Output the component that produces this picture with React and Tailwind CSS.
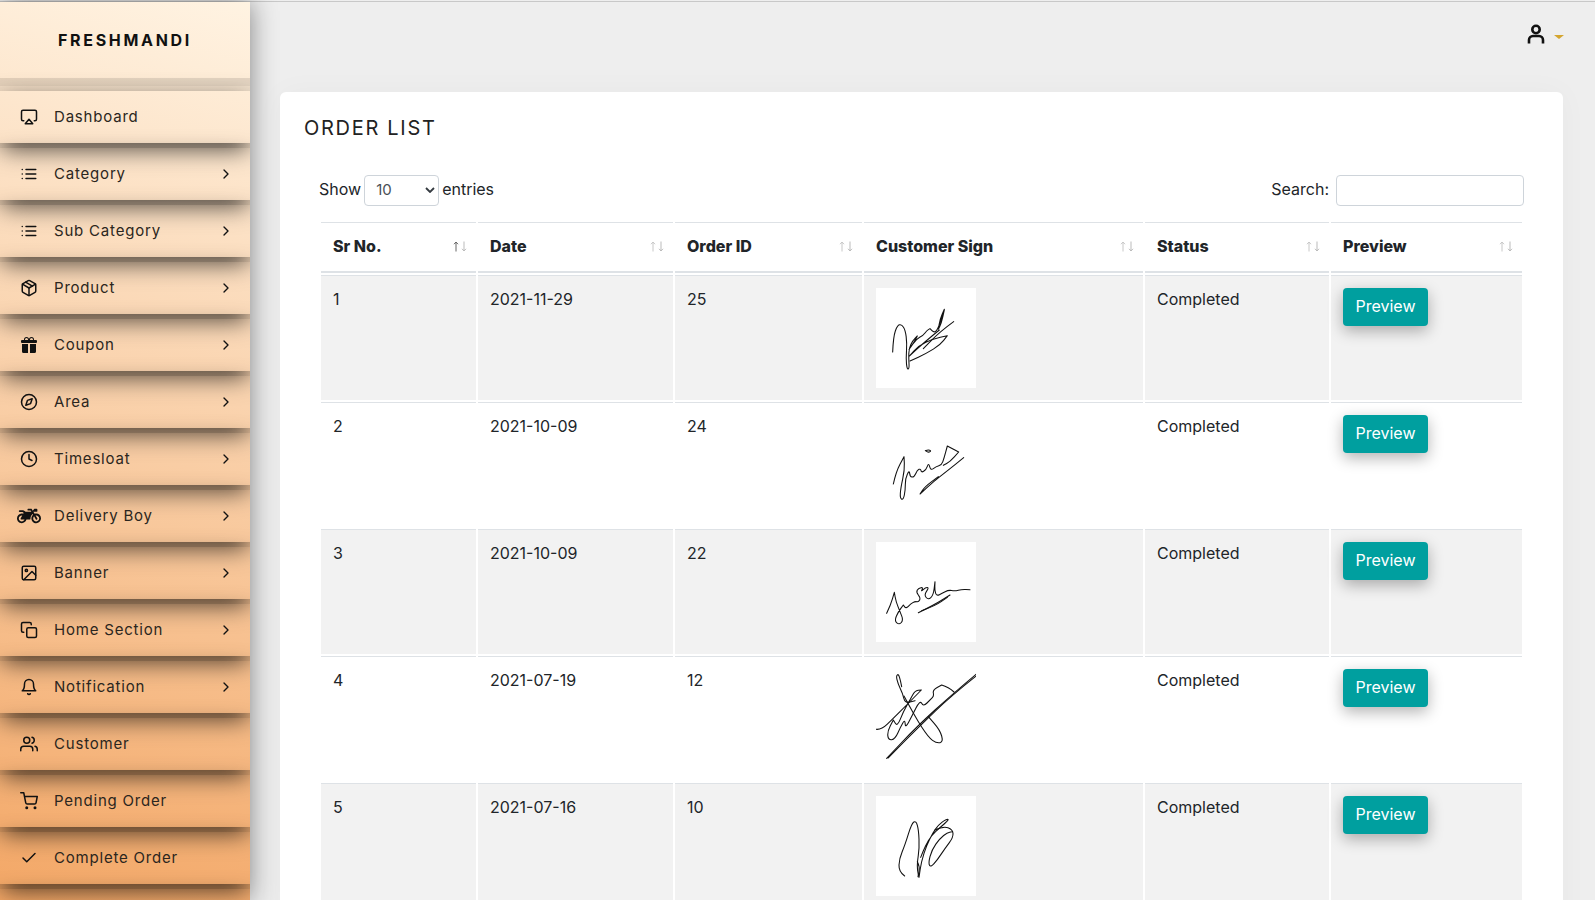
import {
  FiAirplay,
  FiBell,
  FiCheck,
  FiChevronRight,
  FiClock,
  FiCompass,
  FiCopy,
  FiImage,
  FiList,
  FiPackage,
  FiShoppingCart,
  FiUsers,
} from "react-icons/fi";
import { FaMotorcycle } from "react-icons/fa";
import { BsGiftFill } from "react-icons/bs";

const menuItems = [
  { label: "Dashboard", icon: <FiAirplay size={18} /> },
  { label: "Category", icon: <FiList size={18} />, arrow: true },
  { label: "Sub Category", icon: <FiList size={18} />, arrow: true },
  { label: "Product", icon: <FiPackage size={18} />, arrow: true },
  { label: "Coupon", icon: <BsGiftFill size={16} />, arrow: true },
  { label: "Area", icon: <FiCompass size={18} />, arrow: true },
  { label: "Timesloat", icon: <FiClock size={18} />, arrow: true },
  { label: "Delivery Boy", icon: <FaMotorcycle size={24} />, arrow: true },
  { label: "Banner", icon: <FiImage size={18} />, arrow: true },
  { label: "Home Section", icon: <FiCopy size={18} />, arrow: true },
  { label: "Notification", icon: <FiBell size={18} />, arrow: true },
  { label: "Customer", icon: <FiUsers size={18} /> },
  { label: "Pending Order", icon: <FiShoppingCart size={18} /> },
  { label: "Complete Order", icon: <FiCheck size={18} /> },
  { label: "", icon: null },
];

const columns = [
  { title: "Sr No.", width: "w-[155px]", active: true },
  { title: "Date", width: "w-[195px]" },
  { title: "Order ID", width: "w-[187px]" },
  { title: "Customer Sign", width: "w-[279px]" },
  { title: "Status", width: "w-[184px]" },
  { title: "Preview", width: "w-[191px]" },
];

// turns traced points into a smooth line, a doubled point gives a sharp corner
const smooth = (points) => {
  let d = `M${points[0][0]} ${points[0][1]}`;
  for (let i = 1; i < points.length - 1; i++) {
    const midX = (points[i][0] + points[i + 1][0]) / 2;
    const midY = (points[i][1] + points[i + 1][1]) / 2;
    d += `Q${points[i][0]} ${points[i][1]} ${midX} ${midY}`;
  }
  const last = points[points.length - 1];
  return `${d}L${last[0]} ${last[1]}`;
};

// scribbles traced from the signature images, coords are from the zoomed crop
const orders = [
  {
    sr: 1,
    date: "2021-11-29",
    id: 25,
    box: "48 24 300 300",
    strokes: [
      [[98, 216], [100, 170], [112, 136], [125, 133], [136, 150], [141, 190], [138, 235], [141, 268], [148, 266], [146, 235], [147, 205], [158, 182], [172, 168], [172, 168], [160, 190], [147, 208], [147, 208], [168, 178], [190, 166], [200, 152], [210, 146], [210, 146], [222, 158], [232, 150], [245, 115], [253, 88], [253, 88], [240, 118], [235, 148], [235, 148], [244, 130], [253, 90]],
      [[281, 125], [240, 155], [190, 206]],
      [[238, 150], [195, 185], [148, 228], [148, 228], [175, 198], [220, 176], [262, 167], [262, 167], [240, 195], [200, 220], [150, 243]],
    ],
  },
  {
    sr: 2,
    date: "2021-10-09",
    id: 24,
    box: "48 405 300 300",
    strokes: [
      [[100, 612], [108, 575], [132, 530], [132, 530], [134, 570], [122, 625], [120, 655], [130, 660], [136, 630], [136, 595], [148, 570], [150, 590], [162, 592], [172, 570], [182, 566], [184, 578], [198, 570], [206, 548], [212, 572], [228, 560], [245, 555], [252, 535], [262, 498], [262, 498], [296, 516], [296, 516], [270, 545], [250, 556]],
      [[311, 533], [311, 533], [265, 570], [220, 605], [180, 642], [180, 642], [195, 620], [235, 590]],
      [[196, 512], [204, 509], [214, 512], [206, 518], [196, 512]],
    ],
  },
  {
    sr: 3,
    date: "2021-10-09",
    id: 22,
    box: "48 36 300 300",
    strokes: [
      [[80, 250], [92, 225], [103, 187], [103, 187], [108, 215], [120, 245], [130, 270], [118, 285], [103, 272], [115, 245], [130, 225], [130, 225], [138, 236], [152, 222], [165, 214], [176, 216], [182, 204], [168, 186], [176, 174], [190, 172], [182, 186], [197, 172], [207, 173], [192, 195], [205, 210], [220, 196], [225, 155], [225, 155], [224, 182], [230, 198], [246, 190], [265, 180], [285, 183], [305, 178], [330, 179]],
      [[175, 248], [222, 225], [270, 195]],
      [[185, 242], [225, 228], [262, 202]],
    ],
  },
  {
    sr: 4,
    date: "2021-07-19",
    id: 12,
    box: "48 417 300 300",
    strokes: [
      [[48, 598], [64, 600], [100, 565], [140, 525], [184, 480], [184, 480], [165, 482], [150, 510], [130, 545], [112, 590], [100, 570], [100, 570], [82, 605], [85, 630], [105, 628], [122, 590], [135, 568], [136, 595], [155, 560], [180, 510], [190, 530], [212, 508], [222, 498], [218, 480], [245, 465], [245, 465], [265, 472], [282, 486]],
      [[125, 470], [118, 432], [108, 436], [114, 462], [128, 490], [135, 520], [165, 512]],
      [[132, 498], [165, 560], [205, 622], [230, 640], [250, 636], [240, 600], [205, 560]],
      [[348, 433], [280, 490], [170, 590], [80, 685]],
      [[351, 436], [275, 496], [175, 592], [84, 684]],
    ],
  },
  {
    sr: 5,
    date: "2021-07-16",
    id: 10,
    box: "48 48 300 300",
    strokes: [
      [[134, 288], [116, 275], [118, 235], [135, 195], [155, 130], [168, 122], [176, 150], [178, 205], [172, 245], [172, 270], [177, 292], [177, 292], [184, 245], [200, 195], [218, 160], [235, 135], [258, 118], [268, 118], [240, 143], [215, 165], [195, 200], [182, 232]],
      [[225, 150], [250, 138], [278, 148], [280, 172], [255, 205], [232, 240], [212, 262], [205, 250], [215, 210], [240, 175], [262, 158], [276, 155]],
      [[172, 245], [180, 260], [174, 290]],
    ],
  },
];

const Sign = ({ box, strokes }) => (
  <div className="w-[100px] h-[100px] bg-white">
    <svg viewBox={box} className="w-full h-full" fill="none">
      {strokes.map((points, index) => (
        <path
          key={`stroke-${index}`}
          d={smooth(points)}
          stroke="#111"
          strokeWidth="3.2"
          strokeLinecap="round"
          strokeLinejoin="round"
        />
      ))}
    </svg>
  </div>
);

const SortArrows = ({ active }) => (
  <svg width="14" height="11" viewBox="0 0 14 11" fill="none" className="mr-[-3px]">
    <path d="M3 10.500V1M1 3.200L3 1l2 2.200" stroke={active ? "#666" : "#c8c8c8"} />
    <path d="M11 .5V10M9 7.800L11 10l2-2.200" stroke="#bbb" />
  </svg>
);

const SideMenu = () => (
  <aside className="w-[250px] h-[899px] shrink-0 relative z-10 overflow-hidden shadow-[0_0_25px_rgba(0,0,0,0.45)] bg-[linear-gradient(15deg,#f3a766,#fff3e2)]">
    <div className="h-[76px] flex items-center justify-center">
      <span className="font-bold text-[16px] tracking-[2.7px] text-[#111]">FRESHMANDI</span>
    </div>
    <div className="h-[8px] bg-black/10" />
    <div className="h-[5px] bg-black/5" />
    <ul className="flex flex-col gap-[5px]">
      {menuItems.map((item, index) => (
        <li
          key={`menu-${index}`}
          className="h-[52px] flex items-center shadow-[0_8px_24px_-2px_rgba(0,0,0,0.7)]"
        >
          <span className="w-[54px] shrink-0 flex items-center justify-center pl-[4px] text-[#111]">
            {item.icon}
          </span>
          <span className="text-[15px] tracking-[0.8px] text-[#2b2620]">{item.label}</span>
          {item.arrow && (
            <FiChevronRight size={16} className="ml-auto mr-[16px] text-[#111]" />
          )}
        </li>
      ))}
    </ul>
  </aside>
);

const OrderTable = () => (
  <table className="table-fixed border-separate border-spacing-[2px] w-[1205px] text-[16px] text-[#212529]">
    <thead>
      <tr>
        {columns.map((col) => (
          <th
            key={col.title}
            className={`${col.width} h-[51px] border-t border-b-2 border-[#dee2e6] px-3 pb-[2px] text-left font-extrabold`}
          >
            <div className="flex items-center justify-between">
              <span>{col.title}</span>
              <SortArrows active={col.active} />
            </div>
          </th>
        ))}
      </tr>
    </thead>
    <tbody>
      {orders.map((order, index) => (
        <tr key={order.sr} className={index % 2 === 0 ? "bg-[#f2f2f2]" : "bg-white"}>
          <td className="border-t border-[#dee2e6] px-3 pt-[11px] pb-[13px] align-top">{order.sr}</td>
          <td className="border-t border-[#dee2e6] px-3 pt-[11px] pb-[13px] align-top">{order.date}</td>
          <td className="border-t border-[#dee2e6] px-3 pt-[11px] pb-[13px] align-top">{order.id}</td>
          <td className="border-t border-[#dee2e6] p-3 align-top">
            <Sign box={order.box} strokes={order.strokes} />
          </td>
          <td className="border-t border-[#dee2e6] px-3 pt-[11px] pb-[13px] align-top">Completed</td>
          <td className="border-t border-[#dee2e6] p-3 align-top">
            <button className="w-[85px] h-[38px] pb-[2px] rounded bg-[#009f9f] text-white shadow-[0_5px_15px_rgba(0,0,0,0.3)]">
              Preview
            </button>
          </td>
        </tr>
      ))}
    </tbody>
  </table>
);

export default function App() {
  return (
    <div className="w-[1595px] h-[900px] overflow-hidden pt-[1px] bg-[#eeeeee] font-['Inter',sans-serif]">
      <div className="flex border-t border-[#c8c8c8]">
        <SideMenu />
        <main className="flex-1 min-w-0">
          <div className="h-[90px] flex justify-end pt-[22px] pr-[31px]">
            <div className="flex items-start gap-[9px]">
              <svg width="18" height="20" viewBox="0 0 18 20" fill="none" stroke="#111" strokeWidth="2.6">
                <circle cx="9" cy="5.500" r="3.700" />
                <path d="M2 19.500v-3.500a4 4 0 0 1 4-4h6a4 4 0 0 1 4 4v3.500" />
              </svg>
              <span className="mt-[11px] w-0 h-0 border-x-[5px] border-x-transparent border-t-[4px] border-t-[#d4a52f]" />
            </div>
          </div>
          <section className="ml-[30px] w-[1283px] h-[900px] rounded-md bg-white shadow-[0_0_30px_rgba(0,0,0,0.03)] pl-[24px] pt-[24px]">
            <h2 className="text-[20px] leading-[24px] tracking-[1.7px] text-[#222]">ORDER LIST</h2>
            <div className="mt-[35px] w-[1205px] ml-[15px] h-[31px] flex items-center justify-between text-[16px] text-[#212529]">
              <label className="flex items-center gap-[3px]">
                <span className="pb-[4px]">Show</span>
                <span className="relative block">
                  <select
                    defaultValue="10"
                    className="appearance-none w-[75px] h-[31px] pl-[11px] pb-[1px] rounded border border-[#ced4da] bg-white text-[15px] text-[#495057]"
                  >
                    <option value="10">10</option>
                  </select>
                  <svg
                    viewBox="0 0 10 6"
                    className="absolute right-[4px] top-[12px] w-[10px] h-[6px] pointer-events-none"
                    fill="none"
                    stroke="#343a40"
                    strokeWidth="1.8"
                  >
                    <path d="M1 1l4 4 4-4" />
                  </svg>
                </span>
                <span className="pb-[4px]">entries</span>
              </label>
              <label className="flex items-center gap-[7px]">
                <span className="pb-[4px]">Search:</span>
                <input className="w-[188px] h-[31px] rounded border border-[#ced4da] bg-white" />
              </label>
            </div>
            <div className="mt-[14px] ml-[15px]">
              <OrderTable />
            </div>
          </section>
        </main>
      </div>
    </div>
  );
}
